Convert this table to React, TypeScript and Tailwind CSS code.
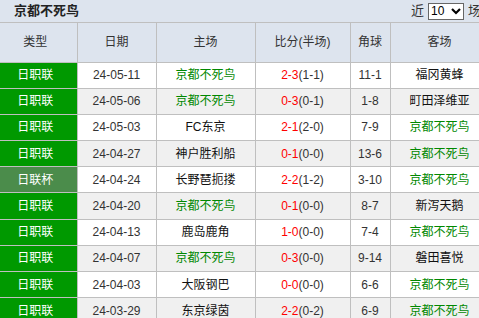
import React from "react";

type Row = {
  type: string;
  cup?: boolean;
  date: string;
  home: string;
  score: string;
  half: string;
  corner: string;
  away: string;
};

const TEAM = "京都不死鸟";

const rows: Row[] = [
  { type: "日职联", date: "24-05-11", home: TEAM, score: "2-3", half: "(1-1)", corner: "11-1", away: "福冈黄蜂" },
  { type: "日职联", date: "24-05-06", home: TEAM, score: "0-3", half: "(0-1)", corner: "1-8", away: "町田泽维亚" },
  { type: "日职联", date: "24-05-03", home: "FC东京", score: "2-1", half: "(2-0)", corner: "7-9", away: TEAM },
  { type: "日职联", date: "24-04-27", home: "神户胜利船", score: "0-1", half: "(0-0)", corner: "13-6", away: TEAM },
  { type: "日联杯", cup: true, date: "24-04-24", home: "长野琶扼搂", score: "2-2", half: "(1-2)", corner: "3-10", away: TEAM },
  { type: "日职联", date: "24-04-20", home: TEAM, score: "0-1", half: "(0-0)", corner: "8-7", away: "新泻天鹅" },
  { type: "日职联", date: "24-04-13", home: "鹿岛鹿角", score: "1-0", half: "(0-0)", corner: "7-4", away: TEAM },
  { type: "日职联", date: "24-04-07", home: TEAM, score: "0-3", half: "(0-0)", corner: "9-14", away: "磐田喜悦" },
  { type: "日职联", date: "24-04-03", home: "大阪钢巴", score: "0-0", half: "(0-0)", corner: "6-6", away: TEAM },
  { type: "日职联", date: "24-03-29", home: "东京绿茵", score: "2-2", half: "(0-2)", corner: "6-9", away: TEAM },
];

function Team({ name }: { name: string }) {
  return <span className={name === TEAM ? "text-[#008800]" : "text-[#111]"}>{name}</span>;
}

export default function App() {
  return (
    <div
      className="w-[479px] h-[318px] overflow-hidden bg-[#dde4ee] text-[12px] text-[#333]"
      style={{ fontFamily: '"Liberation Sans", "Noto Sans CJK SC", sans-serif' }}
    >
      <div className="h-[23px] flex items-center justify-between border-b border-[#bfbfbf]">
        <span className="pl-[14px] font-bold text-[13px] text-[#222]">京都不死鸟</span>
        <div className="flex items-center gap-[4px] text-[13px] text-[#333]">
          <span>近</span>
          <div className="flex items-center h-[17px] w-[36px] border border-[#666] bg-white px-[2px] justify-between">
            <span className="text-[12px] text-black">10</span>
            <svg width="10" height="8" viewBox="0 0 10 8">
              <path d="M1 2 L5 6 L9 2" stroke="#000" strokeWidth="2.2" fill="none" />
            </svg>
          </div>
          <span className="-mr-[2px]">场</span>
        </div>
      </div>
      <table className="border-collapse table-fixed w-[489px]">
        <colgroup>
          <col className="w-[77px]" />
          <col className="w-[79px]" />
          <col className="w-[99px]" />
          <col className="w-[95px]" />
          <col className="w-[40px]" />
          <col className="w-[99px]" />
        </colgroup>
        <thead>
          <tr className="h-[39px] bg-[#dde4ee]">
            {["类型", "日期", "主场", "比分(半场)", "角球", "客场"].map((h, i) => (
              <th
                key={h}
                className={`font-normal text-[12px] text-[#333] border-x border-[#bfbfbf] ${i === 0 ? "border-l-0 pr-[6px]" : ""}`}
              >
                {h}
              </th>
            ))}
          </tr>
        </thead>
        <tbody>
          {rows.map((r, idx) => (
            <tr key={idx} className={`h-[26.2px] ${idx % 2 === 0 ? "bg-white" : "bg-[#f0f0f0]"}`}>
              <td
                className={`border border-l-0 border-[#bfbfbf] text-center text-white pr-[6px] ${r.cup ? "bg-[#4b8c4b]" : "bg-[#009900]"}`}
              >
                {r.type}
              </td>
              <td className="border border-[#bfbfbf] text-center">{r.date}</td>
              <td className="border border-[#bfbfbf] text-center">
                <Team name={r.home} />
              </td>
              <td className="border border-[#bfbfbf] text-center">
                <span className="text-[#ff0000]">{r.score}</span>
                <span>{r.half}</span>
              </td>
              <td className="border border-[#bfbfbf] text-center">{r.corner}</td>
              <td className="border border-[#bfbfbf] text-center">
                <Team name={r.away} />
              </td>
            </tr>
          ))}
        </tbody>
      </table>
    </div>
  );
}
